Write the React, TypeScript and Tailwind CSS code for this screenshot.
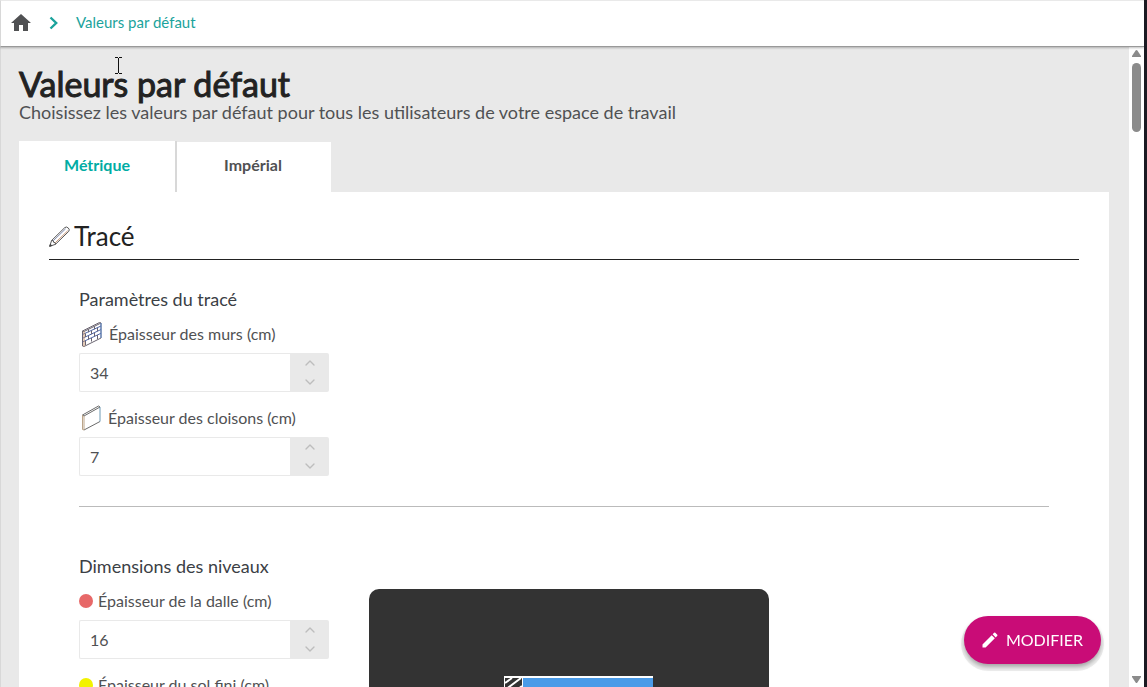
import { useState, type ReactNode } from "react";
import { ChevronDown, ChevronUp } from "lucide-react";
import { MdEdit, MdHome } from "react-icons/md";

type NumberFieldProps = {
  id: string;
  label: string;
  icon: ReactNode;
  initial: number;
};

const tabs = ["Métrique", "Impérial"];

function NumberField({ id, label, icon, initial }: NumberFieldProps) {
  const [value, setValue] = useState(String(initial));

  const step = (delta: number) => {
    setValue(String((Number(value) || 0) + delta));
  };

  return (
    <div className="mb-3.5 w-[250px]">
      <label
        htmlFor={id}
        className="mb-[7px] flex h-6 items-center whitespace-nowrap"
      >
        {icon}
        {label}
      </label>
      <div className="flex h-[39px]">
        <input
          id={id}
          type="text"
          inputMode="numeric"
          value={value}
          onChange={(e) => setValue(e.target.value)}
          className="w-full min-w-0 rounded-l-xs border border-r-0 border-[#e9e9e9] bg-white px-2.5 outline-none"
        />
        <div className="flex w-[39px] shrink-0 flex-col rounded-r-xs bg-[#e9e9e9] text-[#bdbdbd]">
          <button
            type="button"
            aria-label="Augmenter"
            onClick={() => step(1)}
            className="flex flex-1 items-center justify-center"
          >
            <ChevronUp size={16} strokeWidth={2} />
          </button>
          <button
            type="button"
            aria-label="Diminuer"
            onClick={() => step(-1)}
            className="flex flex-1 items-center justify-center"
          >
            <ChevronDown size={16} strokeWidth={2} />
          </button>
        </div>
      </div>
    </div>
  );
}

function PencilIcon() {
  return (
    <svg
      width="22"
      height="22"
      viewBox="0 0 22 22"
      fill="none"
      stroke="#444"
      strokeWidth="0.9"
      strokeLinejoin="round"
      className="mr-[3px]"
    >
      <path d="M0.7 20.3 2.6 14.5 15.8 1.6Q17.5 0.2 19.3 2T19.7 5.4L6.5 18.3Z" />
      <path d="M2.6 14.5 4.3 14.7 4.7 16.4 6.3 16.7 6.5 18.3" />
      <path d="M4.3 14.7 16.6 2.8" stroke="#7580a5" strokeWidth="0.9" />
      <path d="M6.3 16.7 18.7 4.8" stroke="#c18a66" strokeWidth="0.9" />
      <path d="M0.7 20.3 1.4 18.2 2.8 19.6Z" fill="#444" />
    </svg>
  );
}

function BrickWallIcon() {
  return (
    <svg
      width="24"
      height="26"
      viewBox="0 0 24 26"
      fill="none"
      stroke="#6a6470"
      strokeWidth="1"
      className="mr-1.5 shrink-0"
    >
      <path d="M3.5 10 20.5 1.5 22 2V17L5 25.5 3.5 25Z" />
      <path d="M3.5 10 5 10.5 22 2" />
      <path
        d="M3.5 13.5 22 5M3.5 17.3 22 8.5M3.5 21 22 12.3"
        stroke="#4d63a5"
      />
      <path d="M9.5 8.3V11.3M15.5 5.3V8.3M12.5 9.8V13.2M18.5 7V10.3M6.5 12.5V16M9.5 15V18.5M15.5 12V15.5M6.5 20V24M12.5 17V20.5M18.5 14V18" />
      <path d="M5 10.5V25.5" stroke="#c5956e" />
      <path d="M22 2V17" stroke="#5b87c7" />
    </svg>
  );
}

function PartitionIcon() {
  return (
    <svg
      width="24"
      height="26"
      viewBox="0 0 24 26"
      fill="none"
      stroke="#5a5a5a"
      strokeWidth="0.9"
      className="mr-[5px] shrink-0"
    >
      <path d="M3.5 10 19.5 1 21 2 5 11ZM5 25 21 16.5" />
      <path d="M3.5 10V24.5L5 25V11" stroke="#b39a7c" />
      <path d="M21 2V16.5" stroke="#5d8eab" />
    </svg>
  );
}

// Section view of a level, the upper slab stands over a hatched wall
function LevelDiagram() {
  return (
    <div className="min-w-0 max-w-[400px] flex-1 overflow-hidden rounded-[10px] bg-[#333]">
      <svg viewBox="0 -1 400 300" className="block w-full">
        <path d="M135 86H284V88H135Z" fill="#fff" />
        <path
          d="M136 93 143 88M136 100 152 88M143 104 153 96M136 110 153 98"
          stroke="#fff"
          strokeWidth="2"
        />
        <path d="M135.5 86.5V260M153.5 87V260" stroke="#fff" />
        <path d="M154 88H284V120H154Z" fill="#4a9be8" />
      </svg>
    </div>
  );
}

export default function App() {
  const [activeTab, setActiveTab] = useState("Métrique");

  return (
    <div className="flex h-screen flex-col overflow-hidden border-r-3 border-[#1b1a22] bg-white font-['Lato',sans-serif] text-base text-[#505153]">
      <header className="relative z-10 flex h-[47px] shrink-0 items-center border-t border-b border-l border-t-[#e9e9e9] border-b-[#999] border-l-[#d8d8d8] bg-white pb-0.5 pl-2 shadow-[0_1px_2px_rgba(0,0,0,0.25)]">
        <a href="#" aria-label="Accueil">
          <MdHome size={24} />
        </a>
        <svg
          width="10"
          height="14"
          viewBox="0 0 10 14"
          fill="none"
          stroke="#1ba39c"
          strokeWidth="2.4"
          className="mr-[17px] ml-4"
        >
          <path d="M1.5 1.5 7.2 7 1.5 12.5" />
        </svg>
        <a href="#" className="text-[15px] text-[#1ba39c]">
          Valeurs par défaut
        </a>
      </header>

      <div className="flex min-h-0 flex-1">
        <main className="min-w-0 flex-1 overflow-hidden border-l border-[#d8d8d8] bg-[#e9e9e9] px-[18px] pt-4 pr-5">
          <h1 className="text-[34px] leading-[42px] text-[#222] [-webkit-text-stroke:1px_#222]">
            Valeurs par défaut
          </h1>
          <p className="text-lg leading-[14px]">
            Choisissez les valeurs par défaut pour tous les utilisateurs de
            votre espace de travail
          </p>

          <div role="tablist" className="mt-[22px] flex h-[51px] items-end">
            {tabs.map((tab) => (
              <button
                key={tab}
                type="button"
                role="tab"
                aria-selected={activeTab === tab}
                onClick={() => setActiveTab(tab)}
                className={
                  activeTab === tab
                    ? "h-[51px] w-[158px] border-r-2 border-[#d8d8d8] bg-white pb-1 font-bold text-[#00aca4]"
                    : "h-[50px] w-[154px] bg-white pr-0.5 pb-1 font-bold"
                }
              >
                {tab}
              </button>
            ))}
          </div>

          <div className="bg-white p-[30px]">
            <h2 className="flex h-[38px] items-center border-b border-[#222] pb-2 text-[26px] text-[#222]">
              <PencilIcon />
              Tracé
            </h2>

            <div className="px-[30px] pt-[27px]">
              <section className="border-b border-[#bbb] pb-4">
                <h3 className="mb-[11px] text-lg leading-6 text-[#3b4045]">
                  Paramètres du tracé
                </h3>
                <NumberField
                  id="murs"
                  label="Épaisseur des murs (cm)"
                  icon={<BrickWallIcon />}
                  initial={34}
                />
                <NumberField
                  id="cloisons"
                  label="Épaisseur des cloisons (cm)"
                  icon={<PartitionIcon />}
                  initial={7}
                />
              </section>

              <section className="pt-[47px]">
                <h3 className="mb-[11px] text-lg leading-6 text-[#3b4045]">
                  Dimensions des niveaux
                </h3>
                <div className="flex items-start gap-10">
                  <div>
                    <NumberField
                      id="dalle"
                      label="Épaisseur de la dalle (cm)"
                      icon={
                        <span className="mr-[5px] size-3.5 rounded-full bg-[#e76868]" />
                      }
                      initial={16}
                    />
                    <NumberField
                      id="sol"
                      label="Épaisseur du sol fini (cm)"
                      icon={
                        <span className="mr-[5px] size-3.5 rounded-full bg-[#f2f200]" />
                      }
                      initial={7}
                    />
                  </div>
                  <LevelDiagram />
                </div>
              </section>
            </div>
          </div>
        </main>

        <div
          aria-hidden="true"
          className="flex w-[15px] shrink-0 flex-col items-center justify-between bg-white pt-[3px] pb-1 text-[#8b8b8b]"
        >
          <div className="flex flex-col items-center gap-1.5">
            <svg width="9" height="7" viewBox="0 0 9 7" fill="currentColor">
              <path d="M4.5 0Q5 0 5.4 0.6L9 6V7H0V6L3.6 0.6Q4 0 4.5 0Z" />
            </svg>
            <div className="h-[69px] w-[9px] rounded-full bg-[#8b8b8b]" />
          </div>
          <svg width="9" height="7" viewBox="0 0 9 7" fill="currentColor">
            <path d="M0 0H9V1L5.4 6.4Q4.5 7.4 3.6 6.4L0 1Z" />
          </svg>
        </div>
      </div>

      <button
        type="button"
        className="fixed right-[46px] bottom-[23px] z-10 flex h-12 items-center rounded-full bg-[#c90c77] pr-[18px] pl-4 text-white shadow-[0_3px_4px_rgba(0,0,0,0.3),0_4px_0_3px_rgba(0,0,0,0.07)]"
      >
        <MdEdit size={20} className="mr-1.5" />
        MODIFIER
      </button>

      {/* Text cursor */}
      <svg
        width="9"
        height="17"
        viewBox="0 0 9 17"
        fill="none"
        stroke="#111"
        aria-hidden="true"
        className="pointer-events-none absolute top-[57px] left-[114px] z-20"
      >
        <path d="M1 0.5H4M5 0.5H8M4.5 1V16M1 16.5H4M5 16.5H8" />
      </svg>
    </div>
  );
}
